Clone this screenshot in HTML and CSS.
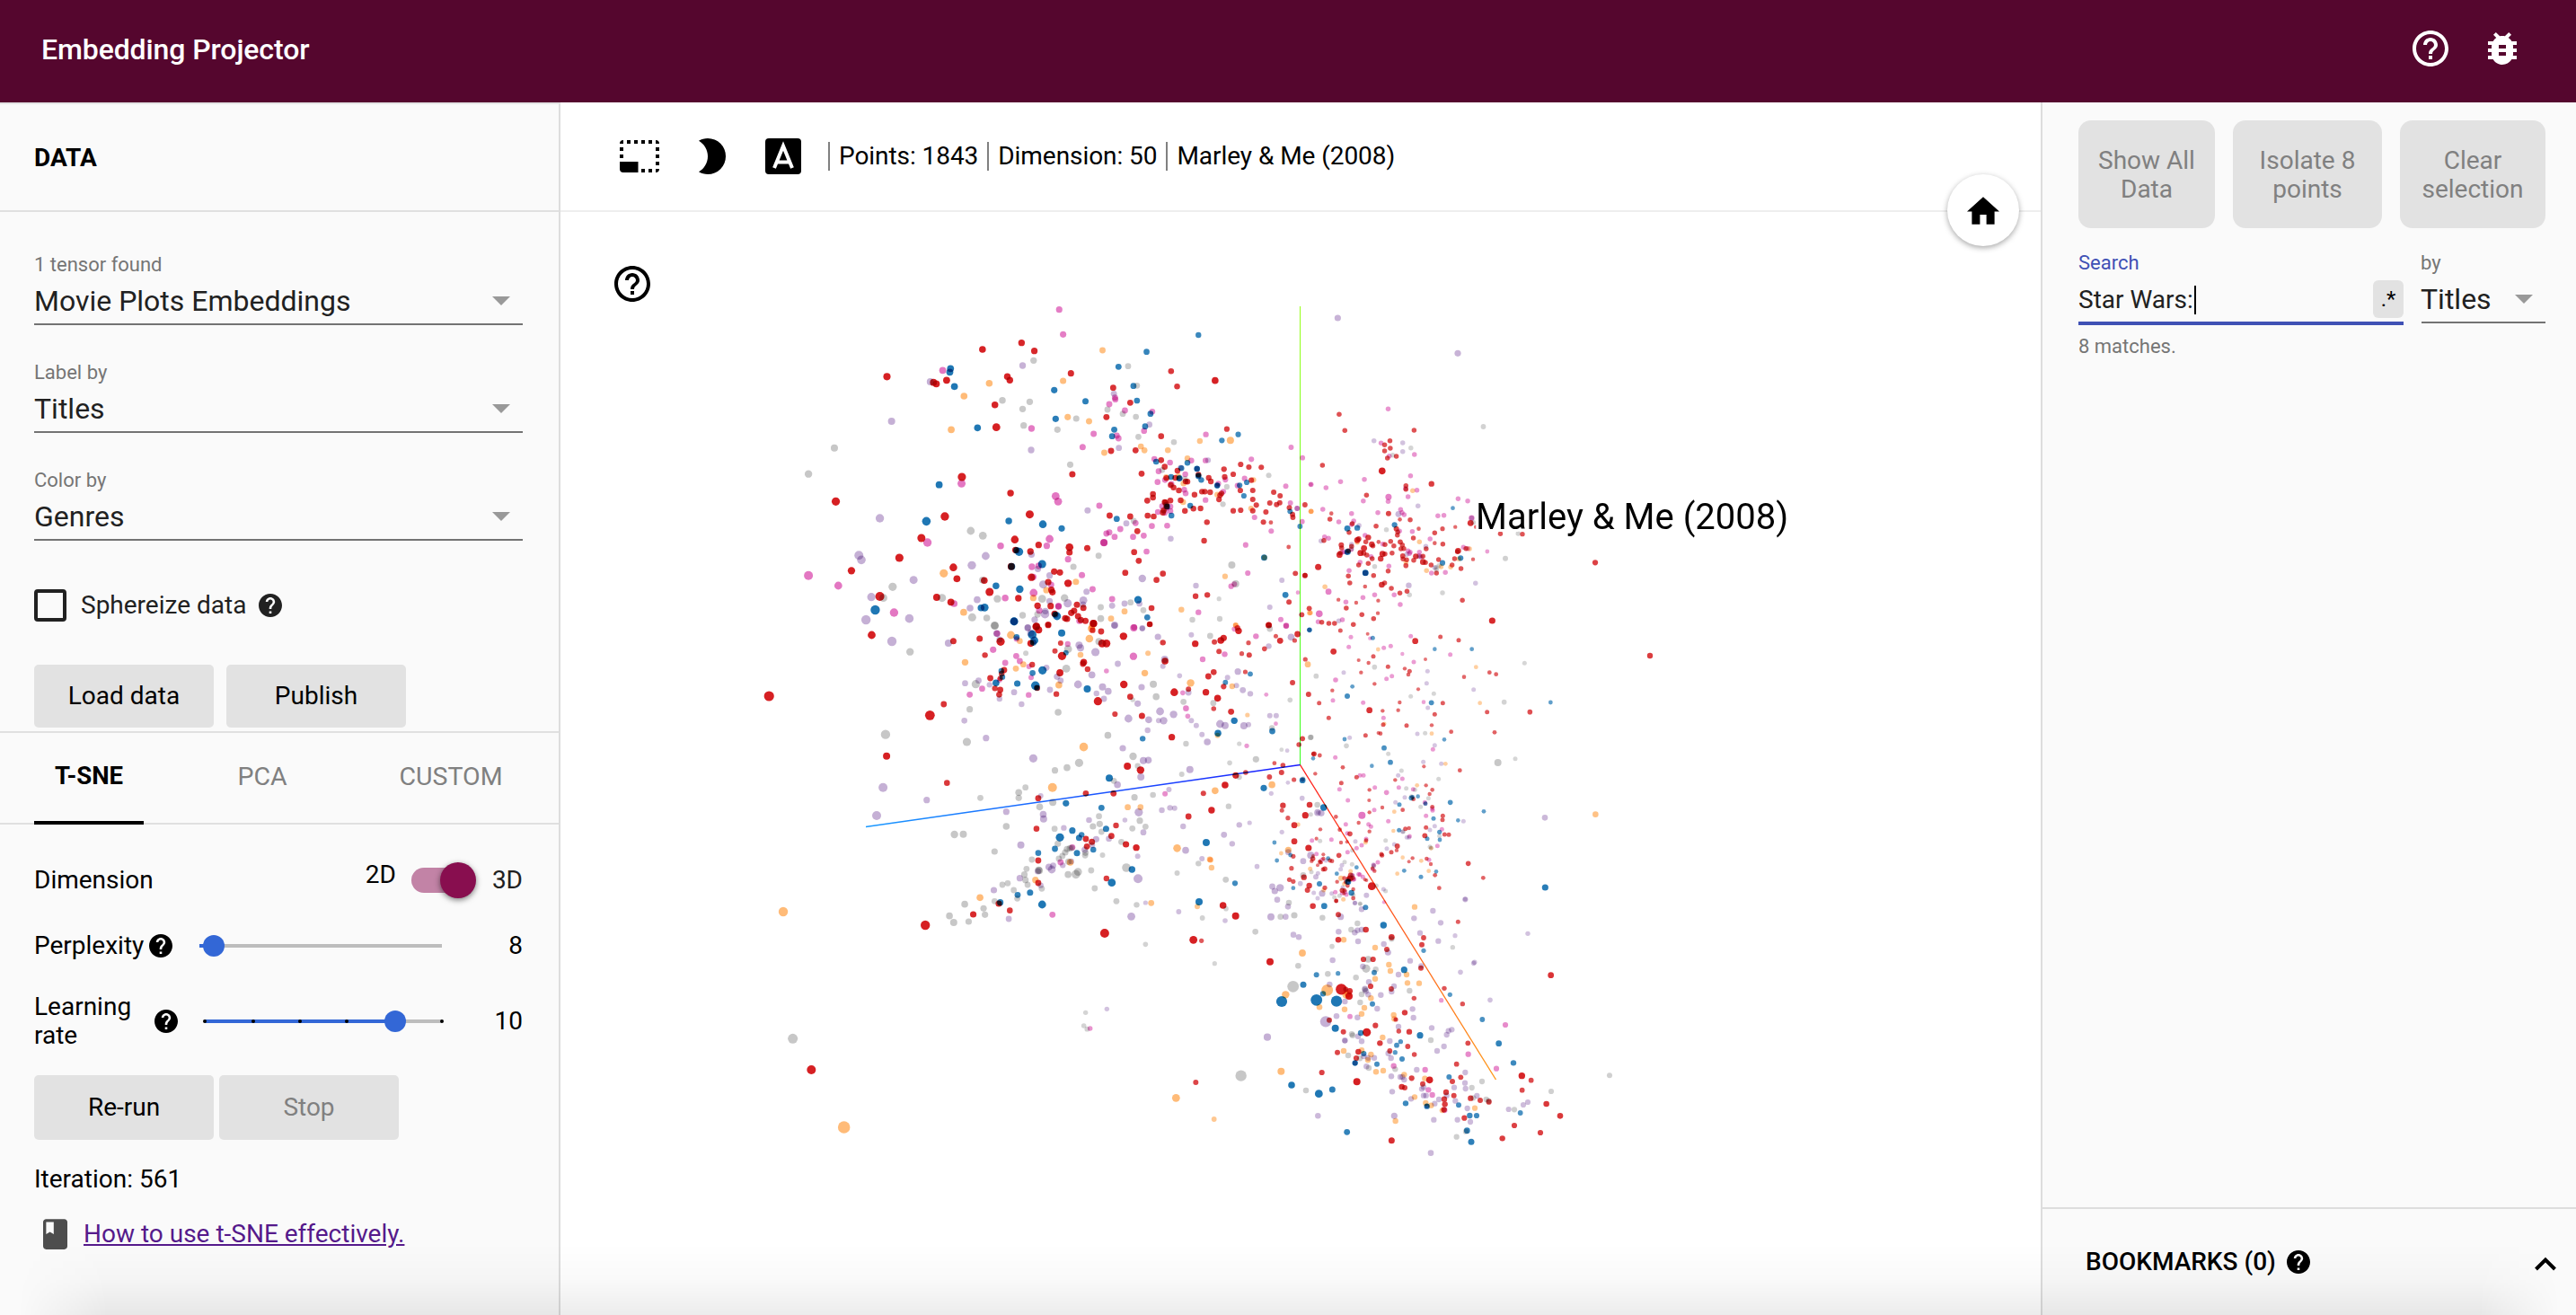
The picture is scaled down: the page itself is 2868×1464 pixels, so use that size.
FILE: index.html
```html
<!DOCTYPE html>
<html lang="en">
<head>
<meta charset="utf-8">
<title>Embedding Projector</title>
<link rel="stylesheet" href="styles.css">
</head>
<body>
<svg class="defs" aria-hidden="true">
  <symbol id="help-filled" viewBox="2 2 20 20"><path d="M12 2C6.48 2 2 6.48 2 12s4.48 10 10 10 10-4.48 10-10S17.52 2 12 2zm1 17h-2v-2h2v2zm2.07-7.75l-.9.92C13.45 12.9 13 13.5 13 15h-2v-.5c0-1.1.45-2.1 1.17-2.83l1.24-1.26c.37-.36.59-.86.59-1.41 0-1.1-.9-2-2-2s-2 .9-2 2H8c0-2.21 1.79-4 4-4s4 1.79 4 4c0 .88-.36 1.68-.93 2.25z"/></symbol>
  <symbol id="help-outline" viewBox="2 2 20 20"><path d="M11 18h2v-2h-2v2zm1-16C6.48 2 2 6.48 2 12s4.480 10 10 10 10-4.480 10-10S17.520 2 12 2zm0 18c-4.410 0-8-3.590-8-8s3.590-8 8-8 8 3.590 8 8-3.590 8-8 8zm0-14c-2.210 0-4 1.790-4 4h2c0-1.100.9-2 2-2s2 .9 2 2c0 2-3 1.750-3 5h2c0-2.250 3-2.500 3-5 0-2.210-1.790-4-4-4z"/></symbol>
</svg>

<header class="topbar">
  <h1 class="topbar-title">Embedding Projector</h1>
  <div class="topbar-icons">
    <svg class="icon-40"><use href="#help-outline"/></svg>
    <svg class="icon-bug" viewBox="4 3 16 18"><path d="M20 8h-2.810c-.45-.78-1.070-1.450-1.820-1.960L17 4.410 15.590 3l-2.170 2.170C12.960 5.060 12.490 5 12 5s-.96.06-1.410.17L8.410 3 7 4.410l1.620 1.630C7.880 6.550 7.260 7.220 6.810 8H4v2h2.090c-.05.33-.09.66-.09 1v1H4v2h2v1c0 .34.04.67.09 1H4v2h2.810c1.040 1.790 2.970 3 5.190 3s4.150-1.210 5.190-3H20v-2h-2.090c.05-.33.09-.66.09-1v-1h2v-2h-2v-1c0-.34-.04-.67-.09-1H20V8zm-6 8h-4v-2h4v2zm0-4h-4v-2h4v2z"/></svg>
  </div>
</header>

<main class="workspace">
  <aside class="panel panel-left">
    <div class="panel-head">DATA</div>
    <section class="data-section">
      <div class="field"><span class="field-label">1 tensor found</span><div class="field-value"><span>Movie Plots Embeddings</span><i class="arrow"></i></div></div>
      <div class="field"><span class="field-label">Label by</span><div class="field-value"><span>Titles</span><i class="arrow"></i></div></div>
      <div class="field"><span class="field-label">Color by</span><div class="field-value"><span>Genres</span><i class="arrow"></i></div></div>
      <div class="check-row"><span class="checkbox"></span><span class="check-text">Sphereize data</span><svg class="icon-help"><use href="#help-filled"/></svg></div>
      <div class="data-buttons"><button class="btn">Load data</button><button class="btn">Publish</button></div>
    </section>
    <nav class="tabs">
      <span class="tab tab-active">T-SNE</span>
      <span class="tab tab-pca">PCA</span>
      <span class="tab tab-custom">CUSTOM</span>
    </nav>
    <section class="tsne">
      <div class="row row-dimension">
        <span class="row-name">Dimension</span>
        <span class="dim-2d">2D</span>
        <span class="toggle"><i class="toggle-knob"></i></span>
        <span class="dim-3d">3D</span>
      </div>
      <div class="row row-perplexity">
        <span class="row-name">Perplexity</span>
        <svg class="icon-help"><use href="#help-filled"/></svg>
        <svg class="slider" viewBox="0 0 280 28"><path class="rail" d="M2 14H272"/><path class="rail-on" d="M2 14H18"/><circle class="thumb" cx="18" cy="14" r="12"/></svg>
        <span class="row-value">8</span>
      </div>
      <div class="row row-rate">
        <span class="row-name row-name-rate">Learning rate</span>
        <svg class="icon-help"><use href="#help-filled"/></svg>
        <svg class="slider" viewBox="0 0 280 28"><path class="rail" d="M8 14H272"/><path class="rail-on" d="M8 14H220"/><g class="ticks"><circle cx="8" cy="14" r="2"/><circle cx="62" cy="14" r="2"/><circle cx="114" cy="14" r="2"/><circle cx="166" cy="14" r="2"/><circle cx="272" cy="14" r="2"/></g><circle class="thumb" cx="220" cy="14" r="12"/></svg>
        <span class="row-value">10</span>
      </div>
      <div class="run-buttons"><button class="btn">Re-run</button><button class="btn btn-off">Stop</button></div>
      <div class="iteration">Iteration: 561</div>
      <div class="howto">
        <svg class="icon-book" viewBox="4 2 16 20"><path d="M18 2H6c-1.100 0-2 .9-2 2v16c0 1.100.9 2 2 2h12c1.100 0 2-.9 2-2V4c0-1.100-.9-2-2-2zM6 4h5v8l-2.500-1.500L6 12V4z"/></svg>
        <a class="howto-link" href="#">How to use t-SNE effectively.</a>
      </div>
    </section>
  </aside>

  <section class="stage">
    <div class="toolbar">
      <svg class="icon-select" viewBox="0 0 44 36">
        <path d="M0 4a4 4 0 0 1 4-4v4zM8 0h4v4H8zM16 0h4v4h-4zM24 0h4v4h-4zM32 0h4v4h-4zM40 0a4 4 0 0 1 4 4h-4zM0 8h4v4H0zM0 16h4v4H0zM40 8h4v4h-4zM40 16h4v4h-4zM40 24h4v4h-4zM40 32h4a4 4 0 0 1-4 4zM32 32h4v4h-4zM24 32h4v4h-4zM0 24h20.500v12H4a4 4 0 0 1-4-4z"/>
      </svg>
      <svg class="icon-moon" viewBox="0 0 30 40"><path d="M10 0a20 20 0 1 1 0 40c-3.600 0-7-1-10-2.700 6-3.500 10-9.900 10-17.300S6 6.200 0 2.700C3 1 6.400 0 10 0z"/></svg>
      <svg class="icon-labels" viewBox="0 0 40 40"><rect width="40" height="40" rx="4"/><path class="icon-labels-a" d="M10 33L20 8.500 30 33M13.500 26.500h13"/></svg>
      <div class="stats"><span class="stat">Points: 1843</span><span class="stat">Dimension: 50</span><span class="stat">Marley &amp; Me (2008)</span></div>
    </div>
    <canvas class="plot" id="plot" width="1648" height="1228"></canvas>
    <svg class="stage-help"><use href="#help-outline"/></svg>
    <div class="home"><svg class="icon-home" viewBox="2 3 20 17"><path d="M10 20v-6h4v6h5v-8h3L12 3 2 12h3v8z"/></svg></div>
    <div class="point-label">Marley &amp; Me (2008)</div>
  </section>

  <aside class="panel panel-right">
    <div class="select-buttons">
      <button class="sel sel-all">Show All Data</button>
      <button class="sel sel-isolate">Isolate 8 points</button>
      <button class="sel sel-clear">Clear selection</button>
    </div>
    <div class="search-row">
      <div class="search">
        <span class="field-label search-label">Search</span>
        <div class="search-box"><span class="search-text">Star Wars:</span><i class="caret"></i><span class="regex">.*</span></div>
        <span class="matches">8 matches.</span>
      </div>
      <div class="field by"><span class="field-label">by</span><div class="field-value"><span>Titles</span><i class="arrow"></i></div></div>
    </div>
    <div class="bookmarks">
      <span>BOOKMARKS (0)</span>
      <svg class="icon-help"><use href="#help-filled"/></svg>
      <svg class="icon-chevron" viewBox="0 0 24 15"><path d="M1.500 13L12 2.500 22.500 13"/></svg>
    </div>
  </aside>
</main>
<div class="window-shade"></div>
<script src="plot.js"></script>
</body>
</html>
```

FILE: styles.css
```css
* { box-sizing: border-box; }
body {
  margin: 0;
  width: 2868px;
  height: 1464px;
  overflow: hidden;
  display: flex;
  flex-direction: column;
  background: #fff;
  color: #000;
  font: 28px/32px Roboto, "Liberation Sans", sans-serif;
}
svg { display: block; flex: none; overflow: visible; }
button { font: inherit; border: 0; padding: 0; margin: 0; }
.defs { display: none; }

.topbar {
  height: 114px;
  flex: none;
  display: flex;
  justify-content: space-between;
  align-items: center;
  padding: 0 66px 6px 46px;
  background: #55062e;
  color: #fff;
}
.topbar-title { margin: 0; padding-top: 1px; font-size: 32px; line-height: 40px; font-weight: 500; letter-spacing: -0.1px; }
.topbar-icons { display: flex; align-items: center; gap: 44px; fill: #fff; }
.icon-40 { width: 40px; height: 40px; }
.icon-bug { width: 32px; height: 36px; }

.workspace { flex: 1; display: flex; min-height: 0; }
.panel { background: #fafafa; flex: none; display: flex; flex-direction: column; }
.panel-left { width: 624px; border-right: 2px solid #ddd; border-top: 2px solid #e4e4e4; }
.panel-head { height: 120px; flex: none; padding: 44px 38px; font-weight: 700; border-bottom: 2px solid #e0e0e0; }
.data-section { height: 578px; flex: none; padding: 42px 40px 0 38px; overflow: hidden; }

.field { height: 120px; display: flex; flex-direction: column; }
.field-label { font-size: 22px; line-height: 30px; padding-top: 2px; color: #757575; }
.field-value {
  height: 52px;
  display: flex;
  align-items: center;
  justify-content: space-between;
  padding: 0 14px 0 0;
  border-bottom: 2px solid #737373;
  color: #212121;
  font-size: 32px;
  line-height: 48px;
}
.arrow { border: 10px solid transparent; border-top-color: #999; border-bottom: 0; }

.check-row { display: flex; align-items: center; height: 36px; margin-top: 18px; color: #212121; fill: #212121; }
.checkbox { width: 36px; height: 36px; border: 4px solid #212121; border-radius: 4px; margin-right: 16px; }
.check-text { width: 198px; }
.icon-help { width: 26px; height: 26px; }

.data-buttons { display: flex; gap: 14px; margin-top: 48px; }
.btn { width: 200px; height: 70px; border-radius: 5px; background: #e2e2e2; color: #000; }
.btn-off { color: #808080; }

.tabs { height: 104px; flex: none; display: flex; padding-left: 38px; border-top: 2px solid #e0e0e0; border-bottom: 2px solid #e0e0e0; color: #808080; font-size: 28.500px; }
.tab { padding-top: 33px; text-align: center; }
.tab-active { width: 122px; padding-top: 32px; color: #000; font-weight: 700; border-bottom: 4px solid #000; margin-bottom: -2px; font-size: 27.500px; }
.tab-pca { width: 264px; }
.tab-custom { width: 156px; }

.tsne { padding: 0 40px 0 38px; }
.row { display: flex; align-items: center; }
.row-dimension { height: 40px; margin-top: 42px; }
.row-name { flex: none; }
.dim-2d { margin: 0 17px 12px auto; }
.toggle { width: 72px; height: 28px; border-radius: 14px; background: linear-gradient(90deg, #c283a6 62px, transparent 62px); margin-right: 18px; display: flex; align-items: center; justify-content: flex-end; }
.toggle-knob { width: 40px; height: 40px; flex: none; border-radius: 50%; background: #880e4f; box-shadow: 0 2px 6px rgba(0, 0, 0, .5); }
.dim-3d { color: #212121; }
.row-perplexity { height: 40px; margin-top: 33px; }
.row-perplexity .row-name { width: 128px; }
.row-perplexity .slider { margin-left: 28px; }
.row-rate { height: 64px; margin-top: 32px; }
.row-name-rate { width: 134px; padding-right: 20px; }
.row-rate .slider { margin-left: 22px; }
.slider { width: 280px; height: 28px; }
.rail { stroke: #bdbdbd; stroke-width: 4; }
.rail-on { stroke: #3367d6; stroke-width: 4; }
.thumb { fill: #3367d6; }
.row-value { margin-left: auto; }
.run-buttons { display: flex; gap: 6px; margin-top: 28px; }
.run-buttons .btn { height: 72px; }
.iteration { margin-top: 28px; }
.howto { display: flex; align-items: center; margin-top: 28px; padding-left: 10px; fill: #4d4d4d; }
.icon-book { width: 27px; height: 34px; margin-right: 18px; }
.howto-link { color: #551a8b; text-decoration: underline; }

.stage { position: relative; width: 1648px; flex: none; }
.toolbar { height: 122px; display: flex; padding: 39px 0 0 66px; border-bottom: 2px solid #eee; }
.icon-select { width: 44px; height: 36px; margin-top: 3px; }
.icon-moon { width: 30px; height: 40px; margin: 1px 44px 0 44px; }
.icon-labels { width: 40px; height: 40px; margin-top: 1px; }
.icon-labels-a { fill: none; stroke: #fff; stroke-width: 4; }
.stats { display: flex; margin: 5px 0 0 30px; letter-spacing: -0.060px; }
.stat { height: 32px; border-left: 2px solid #808080; padding: 0 10px; white-space: nowrap; }
.plot { display: block; }
.stage-help { position: absolute; left: 60px; top: 182px; width: 40px; height: 40px; }
.home { position: absolute; left: 1544px; top: 80px; width: 80px; height: 80px; border-radius: 50%; background: #fff; box-shadow: 0 2px 6px rgba(0, 0, 0, .35); display: flex; align-items: center; justify-content: center; }
.icon-home { width: 36px; height: 31px; }
.point-label { position: absolute; left: 1019px; top: 438px; font-size: 40px; line-height: 48px; white-space: nowrap; -webkit-text-stroke: 6px #fff; paint-order: stroke fill; }

.panel-right { width: 596px; border-left: 2px solid #ddd; }
.select-buttons { display: flex; gap: 20px; padding: 20px 34px 0 40px; }
.sel { height: 120px; border-radius: 14px; background: #e2e2e2; color: #808080; line-height: 32px; padding: 2px 20px 0; }
.sel-all { width: 152px; }
.sel-isolate { width: 166px; }
.sel-clear { width: 162px; }
.search-row { display: flex; gap: 20px; padding: 22px 34px 0 40px; }
.search { width: 362px; display: flex; flex-direction: column; }
.search-label { color: #3f51b5; }
.search-box { height: 54px; display: flex; align-items: center; border-bottom: 4px solid #3f51b5; padding-top: 2px; color: #212121; }
.caret { width: 2px; height: 32px; background: #000; margin-left: 1px; }
.regex { width: 34px; height: 42px; margin: 0 0 2px auto; border-radius: 6px; background: #e2e2e2; color: #000; font-size: 24px; line-height: 42px; text-align: center; }
.matches { font-size: 22px; line-height: 28px; margin-top: 10px; color: #757575; }
.by { width: 138px; }
.by span { margin-left: -1px; }
.bookmarks { margin-top: auto; height: 120px; display: flex; align-items: center; padding: 0 22px 0 48px; border-top: 2px solid #ddd; font-weight: 500; }
.bookmarks .icon-help { margin-left: 12px; }
.icon-chevron { width: 24px; height: 15px; margin: 4px 0 0 auto; fill: none; stroke: #000; stroke-width: 4; }

.window-shade {
  position: absolute;
  left: 0;
  bottom: 0;
  width: 2868px;
  height: 80px;
  background: linear-gradient(180deg, transparent, rgba(0, 0, 0, .02) 50%, rgba(0, 0, 0, .075));
  -webkit-mask-image: linear-gradient(90deg, transparent 20px, #000 120px, #000 2760px, transparent 2850px);
  mask-image: linear-gradient(90deg, transparent 20px, #000 120px, #000 2760px, transparent 2850px);
  pointer-events: none;
}
```

FILE: plot.js
```js
// Genre palette of the scatter plot.
const GENRES = {
  red: [214, 32, 35], blue: [31, 119, 180], orange: [255, 187, 120],
  pink: [227, 119, 194], purple: [197, 176, 213], grey: [199, 199, 199]
};

// The cloud is stored as tiles. Each tile has an origin (window px), a unit
// scale, and a dot radius that changes from its left to its right edge.
// Points are "x,y" or "x,y,radius".
const TILES = [
  { x: 840, y: 320, sx: 2.529, sy: 3, w: 1568, r: [4.4, 2.9], points: {
    red: '373,298 642,207 752,185 788,212 891,287 1010,335 1173,280 1190,331 1297,311,3.8 504,317 512,322 541,310 712,298 719,310 677,392 681,467,4.4 991,433 1058,385 1145,497 1330,473 1073,544 1004,546 584,633,4.6 895,624 1090,622 229,715,4.6 721,687 536,765,4.7 775,758,4.5 470,837,4.5 733,842,4.3 800,860 735,877 777,882 887,868,4.3 887,885 937,871 1000,762 1058,765 1078,814 1069,884 1082,913 1044,953 1150,956 1132,977 1242,1031 1275,1027 1266,846 1274,784 408,903,4.6 273,946 560,935,4.3 570,973 647,979 662,1017,4.5 513,1035 353,1032,5 553,1051 743,1038 844,949 860,952 780,968,4.2 827,984 836,1010 839,1018 883,988,4.2 723,932,4 797,1063 834,1064 908,1060 926,1070 845,1090 892,1087 900,1080 880,1107 875,1105 911,1098 919,1111 932,1114 954,1122,4 793,1133,4.2 827,1127 1118,1071 1113,1125 1145,577 1155,599 1191,612 1160,637 1185,636 1219,649 1214,648 1172,660 1180,668 1195,678 1122,690 1122,702 1106,712 1171,712 1155,717 1160,725 1152,745 1160,733 1150,752 1157,718 1107,762 1124,765 1200,711 1212,746 1236,739 1256,738 1250,625 1279,636 1285,648 1239,692 1260,682 1268,682 1283,684 1324,633 1322,607 1348,624 1369,591 1392,600 1427,601 1399,644 1403,678 1368,678 1315,688 1308,708 1311,694 1348,746 1369,744 1403,708 1413,727 1403,746 1440,750 1462,684 1480,696 1451,720 1479,719 1470,725 1433,784 1454,785,2.4 1506,736 1515,758 1516,768 1550,726 1504,867,2.4 1523,955 1550,962 1505,1051 1562,1072 1541,1093 1448,1127 1360,1137',
    blue: '552,271 550,283 563,331 628,469 848,439 844,343 932,380 1025,265 1067,329 1077,378 1104,215 1250,159 1115,422 1100,464 1013,475 1007,497 1316,511 1362,491 520,659 484,781,4.8 716,780 812,791,4.3 865,805 1020,773 745,883,4.6 738,878 724,932,4 810,924,4.5 680,997 747,1008,4.2 340,1077,5.2 638,1070 648,1069,4.4 731,1115,4.4 852,1098,4.4 847,1093 1080,1043,4.2 1106,1102 1131,582 1202,604 1219,586 1173,633 1197,637 1196,638 1246,605 1246,606 1250,628 1250,631 1258,643 1303,661 1303,662 1366,661 1386,651 1378,696 1227,729 1174,762 1162,732 1508,748 1536,798 1495,1027,3.4 1435,902,3.5',
    orange: '590,363 661,320 554,475 869,312 980,210 882,433 942,447 985,552 1088,531 1098,544 1164,544 1219,571 1254,513 1340,511,4 1159,634 1193,631 1208,655 1207,717 1303,692 1405,643 1398,738 533,955,4.6 589,1085 785,1037 822,1011 905,983 1042,1082 1004,1106 1325,965 1202,1076 950,1133 1355,1128 1436,902 1567,748 1563,1087',
    pink: '858,74 869,157 530,277 1015,368 1016,374 999,390 1043,411 1120,415 780,471 955,489 924,533 1020,495 1025,504 1097,479 1271,491 583,655,4.5 848,697,4.4 855,715,4.4 971,729 984,852,4 984,853,4 991,822 999,818 1014,833 1030,807 1066,833 1096,829 1119,797 1073,787 1162,796 1104,882 1126,573 1138,614 1170,585 1230,578 1270,578 1135,650 1156,643 1174,656 1213,624 1210,676 1214,688 1148,731 1171,732 1136,750 1171,747 1155,753 1160,737 1270,710 1320,682 1326,642 1306,655 1360,662 1380,638 1399,574 1511,534 1543,569 1496,664 1567,658 1509,720 1528,738 1408,768 1455,814 1542,782 1383,860 1389,954 1342,998 1351,991 152,962,5 236,996,4.4 487,852,4.7 693,863 831,840,4.4 823,863 883,908 781,933 800,930 785,967 786,1020,4.4 706,1037 922,961 952,1008 393,1086,4.7 562,1056 835,993 856,1064 856,1066 802,1079 915,1114 1069,1135 1007,1041 1250,1085 1530,1019,2.3 1482,1109 1497,1130',
    purple: '755,261 386,447 779,543 1012,355 1112,458 1026,536 353,771,4.7 294,895,5 301,910,4.8 651,897,4.4 612,928,4.7 448,977,4.5 329,1034,4.6 314,1110,5.2 436,1106,4.8 627,1043 607,1071 780,892 798,940 831,962 813,992,4.5 831,1048 818,1091,4.8 819,1081 882,1055,4.6 926,1045,4.4 935,1016 925,1059 938,745 1047,788 1092,972,4.2 1007,1063 1042,1056 1084,1056 1172,839 1243,996 1200,602 1277,577 1160,728 1528,738 1485,978 1451,1068 769,1137 789,1110 1014,1129 1092,1138 495,315',
    grey: '786,244 698,377 775,382 755,406 758,461 853,475 906,438 889,592 225,536,4 152,623,4.2 1052,263 1077,328 994,408 1037,422 1074,432 1081,499 1181,517 1148,610 1212,640 1330,666 1319,724 1448,628 1068,780 969,896 898,933 609,813,4.4 643,829,4.4 1344,927,4 1355,990,4 389,1000,4.6 363,1037,4.4 528,1037,4.5 642,977 684,1040,4.2 810,1040,4.4 873,1037,4.2 613,1102,4.5 654,1104 676,1129,4.4 755,1095 797,1092 975,1068 975,1106,3.8 1059,1052 1095,1078 1233,1110 1308,1040,2.6 1310,1107' } },
  { x: 1400, y: 320, sx: 2.529, sy: 3, w: 1568, r: [2.8, 2.6], points: {
    red: '230,424 246,478 441,477 183,594 358,526 373,512 374,537 358,546 366,570 391,564 351,613,3.8 490,656,3.2 418,662 418,674 307,694 208,755,2.3 204,774 267,789 258,818 369,755,3 334,797 401,775,2.3 430,776 391,806,3 395,817 394,827 454,806,2.3 499,820 521,806,2.6 557,800,2.2 600,787,3.4 615,800,2.2 684,823 746,824 757,781,2.2 187,845 236,860,3 237,870 231,893,3.4 233,887 256,880 265,865 285,840,3 281,844,3.4 312,835,3.2 305,850 300,871,3.4 290,887,3.4 299,887,3 308,894 322,858,3.2 325,863 341,850,2.3 359,859 375,848 384,863 402,850,2.9 408,860 404,873 412,872 379,887 352,890,3.4 359,890 347,906,3.2 323,906 409,897,2.9 410,907 420,910 418,929,2.8 439,837 440,911 446,898,3.2 466,917,3.3 466,898 475,873 499,854,2.3 522,857 473,919 510,909 489,927 504,954 548,927 573,939 555,906 565,880,3.3 563,883 587,872 607,908,2.2 285,927 312,922 171,934,3.5 134,962,2.8 256,964 327,962 368,947 260,987 350,993,3.3 358,987 303,999,2.3 377,1005 401,1021 421,1015 228,1043,2.2 278,1053,2.2 340,1046,2.2 250,1071 294,1093 339,1088,2.2 327,1106 181,1118 201,1122 217,1122 270,1126 577,1045 661,1113,3.6 951,919,3.1',
    blue: '550,737,2.4 253,805,3.4 281,803,3.2 386,793,3.1 254,883,3.5 252,885 304,953,3.4 304,954,3.3 521,920,3.1 572,904,3.1',
    orange: '437,679 151,748 456,850 418,918 476,946 517,933 544,934 597,873 281,851 190,1000 567,907 149,1087',
    pink: '368,406 348,520 442,558 371,563 301,641 234,649 193,669 150,658,2.4 431,629 449,677 424,699 369,700,3.5 368,715 298,713 184,741 265,755 229,783 271,780 265,792 339,752 403,742 407,752 413,759 436,815 400,814 303,828 189,833 200,838 244,883 264,875 238,885 320,899 353,857 424,880 430,884 456,884 486,840 508,763 525,761 565,706 592,713 603,770,3.2 580,868 592,872 428,889 455,896 461,900 289,918 258,946 370,931 490,954 529,952 647,882,2.4 200,1016,3.4 297,1036 330,1027 249,1051 385,1027 402,1059 174,1090,3.8 239,1110 171,1117 417,671',
    purple: '226,102,3.6 564,220,3.6 328,512 409,519 409,548 286,795 397,757,3.4 452,730 179,847 265,858 420,892 474,865 457,899 499,936 614,988 426,995,3.2 229,1114 603,770',
    grey: '636,465,2.9 432,536 381,560 363,809 330,932 503,935 511,929 504,943 521,1020 428,1027 608,785 734,822 698,905,3 265,873' } },
  { x: 840, y: 690, sx: 2.529, sy: 3, w: 1568, r: [5, 2.8], points: {
    red: '41,255,5.6 330,51,4.4 494,319,5.4 372,455,4 533,282,3.4 542,545,3.3 481,1020,5.2 560,71,3.5 634,63,3.5 649,118,3.2 693,73,4.6 794,22,4 800,34,4 827,17,3 778,79,3.8 862,78,3 846,104,3 866,121,4.6 782,150,3.2 860,177,3.9 850,248,3.2 703,168,3.4 696,180,3.2 664,195,3.4 692,196,3 677,229,3.2 692,234,3.4 689,250,3.3 796,228,3.3 927,142,3.8 925,147,3.4 938,165,3.2 955,13,4 952,35,3.2 976,39,3.4 979,79,4.4 991,79,4.4 1039,55,4.2 1113,15,3 1150,76,3.2 1040,216,4.2 1058,257,3.4 967,272,4.6 1015,315,3.1 1091,321,3.5 1156,138,3.8 1182,242,4.3 1222,232,3 1175,392,3.7 1241,80,3.7 1295,74,3 1313,69,3.8 1321,61,3.6 1363,37,3.7 1308,106,3 1278,189,3.4 1293,175,3.3 1271,242,3.7 1304,262,3.8 1321,223,3.1 1293,297,2.8 1342,307,3.4 1382,174,2.6 1372,113,2.6 1393,118,3 1391,77,2.6 1448,18,3.6 1480,70,3.4 1468,55,2.5 1436,97,2.8 1529,48,3.4 1521,69,2.6 1551,132,2.6 1515,210,3 1560,249,3 1543,397,2.9 1533,417,2.8 1464,479,2.4 1488,486,2.8 1484,510,3 1450,525,2.9 1383,510,2.8 1355,520,3.6 1325,552,3.8 1264,580,3 1287,636,3.7 1222,657,3.4 1050,489,4 1087,502,4.2 1011,580,3.4 933,580,3.3 799,596,3.4 794,698,3.3 799,804,3.4 1018,687,3.2 1005,722,3.4 933,732,3.4 950,742,3.5 936,757,3.4 1046,750,3.6 1075,761,3.7 991,864,3.2 799,879,3.4 688,948,3.6 719,971,3.3 616,984,3.6 986,1047,5 1519,534,2.6 1488,620,3.2 1485,637,2.5 1502,662,2.6 1520,686,3.4 1563,618,3.3 1551,653,3.6 1520,740,3.4 1560,762,3.6 1517,790,2.6 1512,830,2.6 1506,868,2.6 1517,874,2.6 1547,860,3.2 1562,888,3.2 1557,903,3',
    blue: '731,6,4.4 865,44,4 782,50,4.8 788,69,4.4 785,76,3.6 738,58,3.4 811,169,4.6 783,178,3.3 695,171,3.2 698,191,3.2 680,211,3.8 740,213,3.6 791,220,4.8 795,227,3.2 877,110,3 937,231,4 1093,397,3.2 1396,181,2.9 1326,209,2.9 1351,337,3.7 1305,379,3.8 1458,372,3.4 1563,34,2.8 999,529,4 877,613,3.6 977,628,3.4 990,698,3.5 860,727,4.6 895,704,3.6 914,728,3.5 921,718,3.2 846,765,3.4 954,768,3.3 908,779,3.5 799,779,3.3 1063,834,3.7 1006,878,4.4 776,911,3.5 741,919,3.4 692,944,3.6 810,951,4.4 1272,744,4 1353,880,3.1 1434,562,3.6 1543,536,3.4 1543,535,2.4 1464,744,2.4 1471,804,2.4 1509,786,2.4 1517,896,2.4',
    orange: '593,142,3.7 722,51,4.4 747,71,3.3 736,163,3.4 757,149,3.4 857,218,3.8 943,63,4.3 918,117,3.3 949,30,4.2 1099,178,3.7 1108,112,3 1228,211,4.2 1345,222,3.2 1355,18,2.8 1388,318,2.6 1304,386,3 1558,149,3.4 927,425,4.8 839,560,5 1297,571,3.8 1051,626,3.4 1087,626,3.3 1190,763,4.3 1282,800,3.2 1284,802,3.2 1287,828,3.2 889,810,3.8 791,869,3.6 635,928,3.8 1117,946,3.4 81,975,5.2 1457,551,3.8 1503,769,3.6 1531,684,2.4 1483,780,2.4',
    pink: '683,46,3.6 672,100,3.6 738,64,3.2 737,121,3.4 747,138,3.4 706,144,3.4 773,156,3 779,193,3 690,201,3 641,230,3.4 606,250,3.4 772,251,3.2 882,81,3.2 1068,27,4 1067,122,4.2 991,171,2.8 1324,115,3.2 1262,132,3.2 1351,31,2.8 1412,55,3.2 1497,20,3.3 1206,244,2.8 1215,296,3.3 1220,322,2.8 1441,250,2.4 1468,347,2.4 1386,421,2.6 1156,581,3 895,760,3.4 862,810,3.4 839,985,3.4',
    purple: '387,72,5.2 546,78,4 682,46,3.8 770,26,3.6 778,44,4 690,66,3.4 822,160,3.4 914,85,4 918,94,4 960,108,4.6 1014,18,4 1092,29,3 1023,147,3.4 950,184,3.9 911,216,4.4 852,190,3.6 862,203,3.4 832,234,3.4 731,242,3.4 752,282,3.2 690,264,3.2 662,217,3.2 631,203,3.4 593,212,3.4 591,337,3.3 652,395,3.6 785,463,4.6 980,224,4 996,239,3.8 963,246,3.2 984,264,3.4 1090,225,3.6 1079,280,3.6 1053,330,4.4 1110,334,3.8 1142,306,4.4 1152,337,4.2 1138,337,3 1180,316,4.2 1107,369,3.2 1136,57,3.6 1230,50,3 1155,132,4 1150,155,3 1197,187,2.8 1222,243,3.4 1230,337,3 1244,353,3 1260,383,3 1275,408,3.8 1311,348,4.4 1325,353,4 1378,354,4 1391,350,3 1332,193,3 1361,173,3.6 1357,220,3 1375,235,3.4 1396,247,3.2 1448,88,3.2 1511,58,3.8 1451,320,3 1469,320,3 1037,429,3.6 1095,470,4 1109,469,3.8 1088,525,4 1022,551,3.8 1226,500,4 1167,567,3 1147,636,3.2 1170,628,3.2 1183,629,3 1082,643,4.6 1043,669,2.8 942,669,3.3 1095,710,3.4 1079,790,3 1207,690,3.2 1322,718,3.4 1345,748,3.2 1365,685,3.2 1394,678,2.6 1214,770,3.8 1260,798,3 1415,824,2.8 813,650,3.8 814,665,4 709,641,3.6 750,752,4 871,695,3.2 362,560,5 344,654,5 485,602,3.6 806,588,3 962,733,3.6 998,731,3.4 930,768,3.6 951,753,3.2 837,834,4.4 829,826,3.8 841,821,3.4 868,820,3.2 892,807,3.2 747,863,3.6 806,887,3.2 798,840,3.6 674,903,3.6 716,999,3.4 1080,865,5 1061,991,4.4 1101,945,2.6 1500,437,2.4 1455,580,2.6 1542,596,2.8 1502,544,2.4 1485,709,2.6 1503,776,3.4 1545,806,3.4 1537,881,2.8 1458,891,3.4 1465,906,3.6 1480,895,4.2',
    grey: '677,20,4.4 438,107,4.2 764,112,3 883,98,4.4 970,73,4 878,163,4.4 623,215,4.6 606,299,3.6 369,383,5.2 598,408,4.6 855,309,3.8 1123,215,4 1131,257,3.8 1065,267,2.8 1283,54,3.4 1451,30,3.4 1208,274,3.4 1292,278,3.4 1215,414,3.2 1365,414,2.6 1508,268,2.8 1457,361,3.2 1412,466,3.6 1484,434,2.4 1567,392,3 995,386,3.8 914,478,4.6 880,494,3.8 846,503,3.6 1066,456,4.2 1079,488,3.2 1012,538,3.4 763,560,3.4 744,577,3.8 744,595,3.6 636,595,3.4 840,610,4 803,625,3.8 709,690,3.8 1070,593,3.6 1122,585,3.3 1203,516,3 1338,478,2.8 1365,526,3 1335,623,3.2 1085,671,3.6 1101,691,3.4 1064,697,3.4 970,656,3.4 972,682,3.6 953,690,3.6 977,708,3.4 563,717,4.2 588,716,4 676,774,3.6 845,698,3.4 854,748,3.6 888,763,3.6 893,762,3.6 880,766,3.6 875,777,3.6 867,789,3.4 857,798,3.4 932,778,3.6 931,787,3.4 1033,742,3.4 980,786,3 884,808,3.6 1047,828,4.8 905,850,4.8 911,842,4.4 883,851,3.8 948,837,3.4 781,801,3.4 800,836,4 802,838,4 766,832,3.4 760,851,3.6 763,869,3.6 769,885,3.4 809,898,3.4 730,903,3.4 740,931,3.4 713,880,3.4 698,885,3.4 676,940,3.4 645,964,3.6 649,985,3.6 592,950,3.8 549,989,3.8 561,1011,4 603,1008,3.6 958,897,3.4 1019,940,3.4 1076,952,3.2 1101,1084,2.8 1190,846,3 1250,814,3.2 1327,868,3.4 1545,853,3.4 1545,530,2.4' } },
  { x: 1400, y: 700, sx: 3, sy: 3, w: 1500, r: [2.5, 2.5], points: {
    red: '277,6 368,17,2 254,76,3.4 387,92 338,105,2.1 371,114,2.2 346,146,2.2 436,127 492,133,2.2 508,142 504,153,2.3 561,102,2 611,27 672,38 527,41,3.4 391,184,2.2 537,202,2.1 250,206,2.2 206,248 374,272,3.4 238,298 475,246,2.2 470,272,2.2 418,274,2.2 420,320 498,323 404,348,2.1 411,350,2.3 361,356 582,322,2.2 592,286 619,248 690,161,2.3 775,146,2.4 797,152,2.4 767,278,2.5 910,278,2.8 792,346,2.4 647,344,2.4 1311,90,3.2 676,473,2.4 189,418,2.9 187,418,2.4 208,423,2.4 285,463,2.4 193,484,2.2 556,460,2.1 331,496 280,515 460,505,2.2 374,538,2.2 373,573,2.1 374,613,2.2 417,597,2.2 262,628,2.3 338,648,2.2 374,677,2.2 210,670,2.2 275,671,2.4 309,685,2.8 299,712,2 279,714,2.2 197,701,2.1 363,707,2.4 563,523,2.2 584,538,2.3 575,552,2.2 521,569,2.4 584,595,2.4 485,605,2.4 619,625 618,638 494,668 506,666,2.3 563,664 559,691,2.9 625,687 639,688 467,726,2.9 447,746 416,757 465,740,2.2 414,753 518,766,2.2 506,778,2 565,768,2.3 579,786,2.2 593,823,2.4 704,784,2.8 754,832,2.4 607,866,2.4 185,768,2.8 181,776,2.2 209,780,2.4 208,776,2 201,790,2 220,768,2.2 220,754,2.1 213,781,2 242,774,2.4 249,776,2.4 272,757,2.8 225,802,2.8 219,804,2.4 186,759,2 382,860,4.4 384,800,2.2 391,809,2.2 359,838,2 364,840,2 311,823,2.9 309,834,3.4 304,836,2.9 318,832,2.6 290,833,2.4 266,845,2.2 294,846,2.2 301,858,2.4 283,874,2.8 291,874,2.4 320,870,2.2 263,909,2.3 320,900,2.4 225,865,2.6 289,884,2',
    blue: '173,4 385,31 592,68,2.3 716,68,2.4 317,193,2.4 300,225,3 581,247,2.9 979,246,2.4 291,369,2.4 423,398,2.9 624,370,2.3 444,446,2.9 382,458,2.3 186,433,2.3 514,565,2.9 518,562,2.4 536,560,2.3 561,584,2.4 644,580,2.8 474,587 588,634 670,640,2.3 756,610,2.4 473,673 608,679,2.6 567,701 609,705,2.4 221,597,3.7 490,808,2.4 546,829 597,811,2.3 331,797,2.4 265,818,2.4 236,767,2.4 303,845,3.3 301,845,2.9 207,852,3 314,882,3.2 961,864,3.6',
    orange: '403,69,2.4 730,128,2.4 743,248,2.4 424,317,2.2 582,350,2.4 628,451,2.4 533,523,2.4 1129,620,3.3 457,611,2.4 454,675,2.3 485,764,2.3 547,775,2.4 580,733,2.4 572,809,2.4 467,818,2.4 361,713 311,810 279,833,3 221,873 287,904 176,802 290,852',
    pink: '312,28 305,61 376,32,2.2 422,64 445,58 484,84,2.2 522,111 512,25 449,158 431,167 644,86 261,171,2.8 252,239 353,247 421,298 555,245,2.3 586,403 260,430 342,490 354,490 484,501 472,530 392,530 431,547,2.8 274,536 302,573 390,605 349,623,4 437,643 371,653 379,661 295,653 300,683 563,625 559,580 584,601 585,607 616,670 601,725 508,693 520,536 247,704 301,746 331,733 348,723 363,702 182,707 197,752 215,772 573,772 402,780 389,790 386,803 338,820 342,821 352,829 318,824 323,836 320,838 260,880 293,880 297,888 283,883',
    purple: '288,146 568,142 565,182 722,203 569,264 534,351 308,364 592,389 554,445 614,451 470,490 461,580 492,563 688,643 960,631,3.3 592,659 576,672 506,697 499,697 457,720 432,734 327,710 213,616,3.6 201,614,3.8 202,614,2.4 178,757,4 229,774 278,803 282,790 316,823 195,829,3 202,817 188,882 216,884,3.6 201,900 248,884 285,864 364,890,3 325,916 387,788 421,870 485,678 561,584 694,903',
    grey: '391,128,2.8 196,158,2.9 589,217 512,226 892,115 824,245,2.8 803,447,4 861,434 560,349 177,363,3.1 297,391,2.8 437,418 481,474 605,502 497,533 526,538 514,560 571,566 545,595 200,588,3.3 608,692 576,728 580,732 428,707 487,677 209,709 317,740 291,779 316,787 388,793 180,812 178,620 257,897 274,892 320,889 343,918 397,858 428,876' } },
  { x: 840, y: 1070, sx: 3, sy: 3, w: 1500, r: [5, 3], points: {
    red: '190,363,5',
    orange: '299,555,6.8',
    pink: '1121,225,2.8',
    purple: '1177,160,2.7',
    grey: '128,259,5.5 1106,172,2.7 1100,216,2.8 1111,227,2.9' } },
  { x: 1300, y: 1000, sx: 3, sy: 3, w: 1560, r: [3.4, 3], points: {
    red: '185,24,3.8 227,59,4 86,139,4.4 113,142,2.6 342,212,4 94,615,3 485,26 570,55,3 563,9,2.4 662,105,3.3 570,139 748,130,3.4 732,171,3 654,204,3.1 686,204,3.1 678,294,3.1 580,304,6.2 595,304,2.9 608,310,3.4 606,327,4 747,303,2.9 823,334,2.7 792,382 540,407,3 694,425,3.1 587,446,3 665,448,4.6 772,444,2.7 807,446,3.2 709,484,3.2 802,495,2.9 742,510,2.9 824,522,2.8 567,515,3 637,513,3.3 630,534,3.1 515,582,3.1 632,613,4 815,601,3.1 875,607,3.8 852,620,3 782,630,3.3 792,633,3 748,809,3.5 855,132,2.9 849,155,3 846,233,3 970,79,2.5 924,301,2.7 985,353,2.7 1280,257,3.4 1003,484,2.9 965,554,2.9 979,598,2.9 951,612,3 930,648,3.2 924,671,3.2 926,688,3.2 923,706,3.2 956,659,3 991,734,3.1 1012,668,3.2 1044,675,3 1073,680,3.1 1183,593,3.7 1214,608,2.9 1184,641,2.9 1265,687,3.3 1311,727,3.3 1158,759,3.1 1245,783,3.1 1118,802,3.2 762,405,2.6',
    blue: '105,12,4 523,26,3.4 661,31,3 721,90,3.7 855,175,2.6 569,251,2.6 497,256,3 453,289,3.5 790,239,3.6 690,248,3 381,345,6.1 497,340,6.4 564,344,6.2 519,319,3.2 684,353,3 560,434,4 645,450,3.2 843,458,3.6 765,491,2.9 778,479,2.7 760,515,2.6 783,537,3 655,519,3.1 626,550,3.2 626,551,2.8 699,554,3 414,624,3.8 505,653,4.4 550,639,3.5 795,685,3.2 866,695,3.2 866,694,2.6 599,781,3.4 943,322,2.6 1051,405,2.9 1106,485,3.4 1155,550,3.2 940,597,3 972,691,3 1009,726,3.2 1032,726,3.1 1000,776,3.4 1014,814,3.5 1178,717,2.9',
    orange: '99,28,3 588,139 825,29 693,165 450,183,3.9 739,222 744,243 798,255 801,283 840,284 693,269 394,322,4.2 533,307,6.4 597,322,4.6 602,318,4 507,364 591,371 657,366 648,386 679,334 755,390 757,403 718,465 588,510 648,508 679,522 669,540 696,580 720,576 379,578,4 28,667,4.4 155,738,2.9 790,589 859,602 825,664 862,684 880,692 917,709,3 1026,701 761,744',
    pink: '723,13,2.2 914,341,2.6 609,395,2.9 755,560 860,573 871,640 884,657 1128,423 1098,569 1004,521 925,708 762,404,2',
    purple: '37,45,2.9 366,5 192,75,2.8 402,28 345,62,4 394,62 420,122 438,130 571,112 578,62,3.6 648,37 625,115 634,107 648,105 636,144 626,16,2.6 551,207 541,288 823,67 886,42 912,82 843,116 722,153 736,181,3.5 810,209 847,226 904,143 960,125,2.6 994,4 1203,118,2.7 1025,214,2.8 1022,217,2.8 978,247,2.8 1077,340,2.8 652,228 672,280 771,255 756,294 748,312 659,303,3.4 662,310,3.4 670,322 712,323 592,345 564,394 700,369 634,398 818,370 821,399 528,412,6.2 333,464,4.1 592,475 592,476,3 636,461 648,478 771,429 742,477 737,518 746,534 882,433 949,439 938,443 932,456 923,495 900,510 655,528 670,533 690,533 664,562 747,595 777,597 784,597 790,606 832,573 750,646 855,631 849,637 855,659 863,659 813,670 892,686 906,672 502,727 757,727,3.6 889,740 879,851,3.3 994,582 993,617 995,636 957,632 932,659 961,677 1001,702 1033,660 1011,747 968,740 1139,705 1188,690 1203,681',
    grey: '195,35,2.8 116,66,2.9 405,15 377,62 423,57,3.6 293,112 517,65 157,218,2.6 436,226 535,253 549,161,2.8 634,84 613,105,3.2 643,19,2.2 748,136 670,204,3.8 663,235,4.6 695,238 629,265 419,295,6.4 659,305 648,321 643,348 808,309 952,164,2.7 615,454 618,458 603,525 642,535 672,567 760,571 879,474 245,593,6.2 462,642 1050,612 1016,633 1021,667 1064,672 1072,677 965,797 996,779 1158,706 1281,645 1476,592' } }
];

const AXES = [
  { to: [1447.5, 341], width: 1, stops: ['#33ff1a', '#99ff1a'] },
  { to: [964, 920.5], width: 1.4, stops: ['#1a1aff', '#1a99ff'] },
  { to: [1665.5, 1202], width: 1.4, stops: ['#ff1a1a', '#ff991a'] }
];

const ctx = document.getElementById('plot').getContext('2d');
ctx.translate(-624, -236);
ctx.globalCompositeOperation = 'multiply';

for (const axis of AXES) {
  const [x, y] = axis.to;
  const g = ctx.createLinearGradient(1447.5, 851.5, x, y);
  g.addColorStop(0, axis.stops[0]);
  g.addColorStop(1, axis.stops[1]);
  ctx.strokeStyle = g;
  ctx.lineWidth = axis.width;
  ctx.beginPath();
  ctx.moveTo(1447.5, 851.5);
  ctx.lineTo(x, y);
  ctx.stroke();
}

for (const t of TILES) {
  for (const [genre, list] of Object.entries(t.points)) {
    const [r, g, b] = GENRES[genre];
    for (const item of list.split(' ')) {
      const [px, py, pr] = item.split(',').map(Number);
      const radius = pr || t.r[0] + (t.r[1] - t.r[0]) * px / t.w;
      // Small dots are far away and fade into the background.
      const alpha = Math.max(0.58, Math.min(1, 0.2 + radius * 0.21));
      ctx.fillStyle = `rgba(${r}, ${g}, ${b}, ${alpha})`;
      ctx.beginPath();
      ctx.arc(t.x + px / t.sx, t.y + py / t.sy, radius, 0, Math.PI * 2);
      ctx.fill();
    }
  }
}
```
